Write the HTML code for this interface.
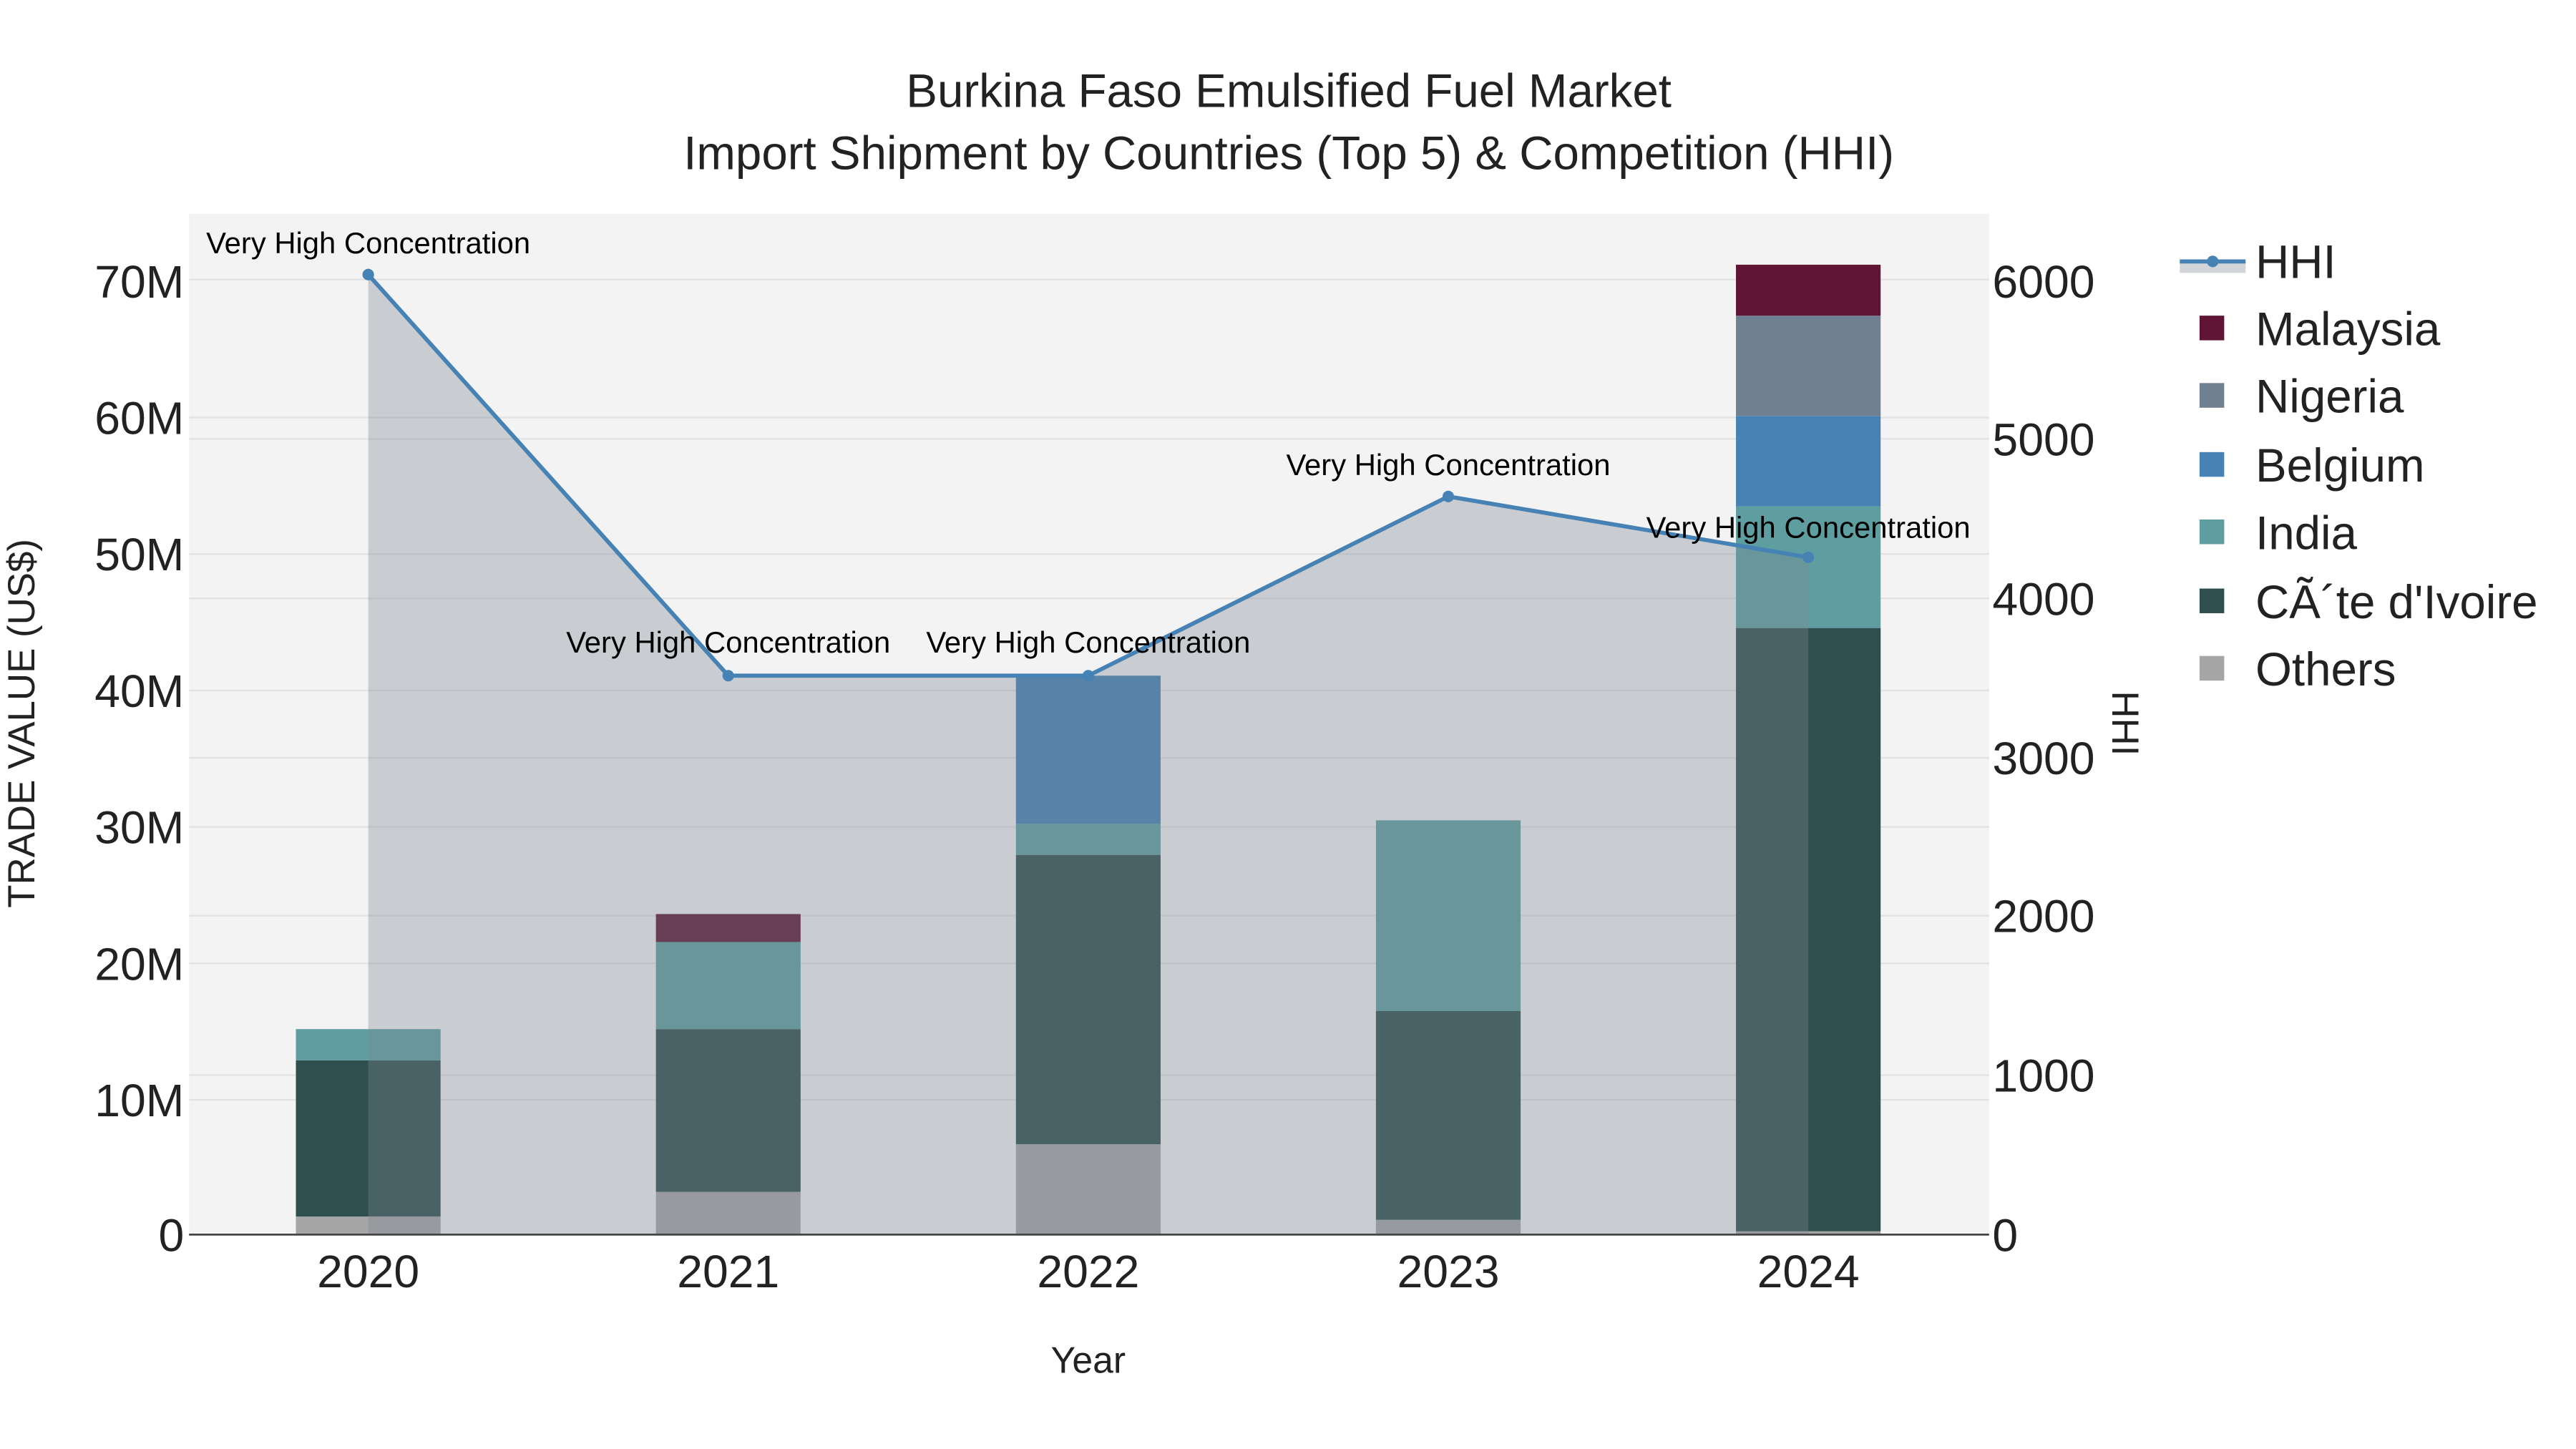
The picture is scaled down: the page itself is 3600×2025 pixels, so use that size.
<!DOCTYPE html>
<html><head><meta charset="utf-8"><style>html,body{margin:0;padding:0;background:#fff}svg{display:block}</style></head>
<body>
<svg width="3600" height="2025" viewBox="0 0 1567 881.4" xmlns="http://www.w3.org/2000/svg" font-family="Liberation Sans, sans-serif">
<rect width="1567" height="882" fill="#fff"/>
<rect x="115" y="130" width="1095" height="621" fill="#f3f3f3"/>
<g stroke="#e2e2e2" stroke-width="1">
<line x1="115" x2="1210" y1="170" y2="170"/><line x1="115" x2="1210" y1="254" y2="254"/><line x1="115" x2="1210" y1="337" y2="337"/><line x1="115" x2="1210" y1="420" y2="420"/><line x1="115" x2="1210" y1="503" y2="503"/><line x1="115" x2="1210" y1="586" y2="586"/><line x1="115" x2="1210" y1="669" y2="669"/>
<line x1="115" x2="1210" y1="267" y2="267"/><line x1="115" x2="1210" y1="364" y2="364"/><line x1="115" x2="1210" y1="461" y2="461"/><line x1="115" x2="1210" y1="557" y2="557"/><line x1="115" x2="1210" y1="654" y2="654"/>
</g>
<g>
<rect x="180" y="740" width="88" height="11" fill="#a6a6a6"/>
<rect x="180" y="645" width="88" height="95" fill="#2f4f4f"/>
<rect x="180" y="626" width="88" height="19" fill="#5f9ea0"/>
<rect x="399" y="725" width="88" height="26" fill="#a6a6a6"/>
<rect x="399" y="626" width="88" height="99" fill="#2f4f4f"/>
<rect x="399" y="573" width="88" height="53" fill="#5f9ea0"/>
<rect x="399" y="556" width="88" height="17" fill="#5e1636"/>
<rect x="618" y="696" width="88" height="55" fill="#a6a6a6"/>
<rect x="618" y="520" width="88" height="176" fill="#2f4f4f"/>
<rect x="618" y="501" width="88" height="19" fill="#5f9ea0"/>
<rect x="618" y="411" width="88" height="90" fill="#4682b4"/>
<rect x="837" y="742" width="88" height="9" fill="#a6a6a6"/>
<rect x="837" y="615" width="88" height="127" fill="#2f4f4f"/>
<rect x="837" y="499" width="88" height="116" fill="#5f9ea0"/>
<rect x="1056" y="749" width="88" height="2" fill="#a6a6a6"/>
<rect x="1056" y="382" width="88" height="367" fill="#2f4f4f"/>
<rect x="1056" y="308" width="88" height="74" fill="#5f9ea0"/>
<rect x="1056" y="253" width="88" height="55" fill="#4682b4"/>
<rect x="1056" y="192" width="88" height="61" fill="#708090"/>
<rect x="1056" y="161" width="88" height="31" fill="#601535"/>
</g>
<polygon points="224,167 443,411 662,411 881,302 1100,339 1100,751 224,751" fill="rgb(122,134,145)" fill-opacity="0.35"/>
<polyline points="224,167 443,411 662,411 881,302 1100,339" fill="none" stroke="#4682b4" stroke-width="2.5"/>
<g fill="#4682b4"><circle cx="224" cy="167" r="3.5"/><circle cx="443" cy="411" r="3.5"/><circle cx="662" cy="411" r="3.5"/><circle cx="881" cy="302" r="3.5"/><circle cx="1100" cy="339" r="3.5"/></g>
<line x1="115" x2="1210" y1="751" y2="751" stroke="#444" stroke-width="1.2"/>
<g font-size="18.2" text-anchor="middle" fill="#000">
<text x="224" y="154">Very High Concentration</text>
<text x="443" y="397">Very High Concentration</text>
<text x="662" y="397">Very High Concentration</text>
<text x="881" y="289">Very High Concentration</text>
<text x="1100" y="327">Very High Concentration</text>
</g>
<g font-size="28" text-anchor="end" fill="#222">
<text x="112" y="761">0</text><text x="112" y="679">10M</text><text x="112" y="596">20M</text><text x="112" y="513">30M</text><text x="112" y="430">40M</text><text x="112" y="347">50M</text><text x="112" y="264">60M</text><text x="112" y="181">70M</text>
</g>
<g font-size="28" text-anchor="start" fill="#222">
<text x="1212" y="761">0</text><text x="1212" y="664">1000</text><text x="1212" y="567">2000</text><text x="1212" y="471">3000</text><text x="1212" y="374">4000</text><text x="1212" y="277">5000</text><text x="1212" y="181">6000</text>
</g>
<g font-size="28" text-anchor="middle" fill="#222">
<text x="224" y="783">2020</text><text x="443" y="783">2021</text><text x="662" y="783">2022</text><text x="881" y="783">2023</text><text x="1100" y="783">2024</text>
</g>
<text x="662" y="835" font-size="22.5" text-anchor="middle" fill="#222">Year</text>
<text transform="translate(21,440) rotate(-90)" font-size="23" text-anchor="middle" fill="#222">TRADE VALUE (US$)</text>
<text transform="translate(1285,440) rotate(90)" font-size="23" text-anchor="middle" fill="#222">HHI</text>
<g font-size="28.5" text-anchor="middle" fill="#222">
<text x="784" y="65">Burkina Faso Emulsified Fuel Market</text>
<text x="784" y="103">Import Shipment by Countries (Top 5) &amp; Competition (HHI)</text>
</g>
<rect x="1326" y="158" width="40" height="8" fill="rgb(122,134,145)" fill-opacity="0.35"/>
<line x1="1326" x2="1366" y1="159" y2="159" stroke="#4682b4" stroke-width="2.5"/>
<circle cx="1346" cy="159" r="3.5" fill="#4682b4"/>
<rect x="1338" y="192" width="15" height="15" fill="#601535"/>
<rect x="1338" y="233" width="15" height="15" fill="#708090"/>
<rect x="1338" y="275" width="15" height="15" fill="#4682b4"/>
<rect x="1338" y="316" width="15" height="15" fill="#5f9ea0"/>
<rect x="1338" y="358" width="15" height="15" fill="#2f4f4f"/>
<rect x="1338" y="399" width="15" height="15" fill="#a6a6a6"/>
<g font-size="28.5" fill="#222">
<text x="1372" y="169">HHI</text><text x="1372" y="210">Malaysia</text><text x="1372" y="251">Nigeria</text><text x="1372" y="293">Belgium</text><text x="1372" y="334">India</text><text x="1372" y="376">CÃ´te d'Ivoire</text><text x="1372" y="417">Others</text>
</g>
</svg>
</body></html>
